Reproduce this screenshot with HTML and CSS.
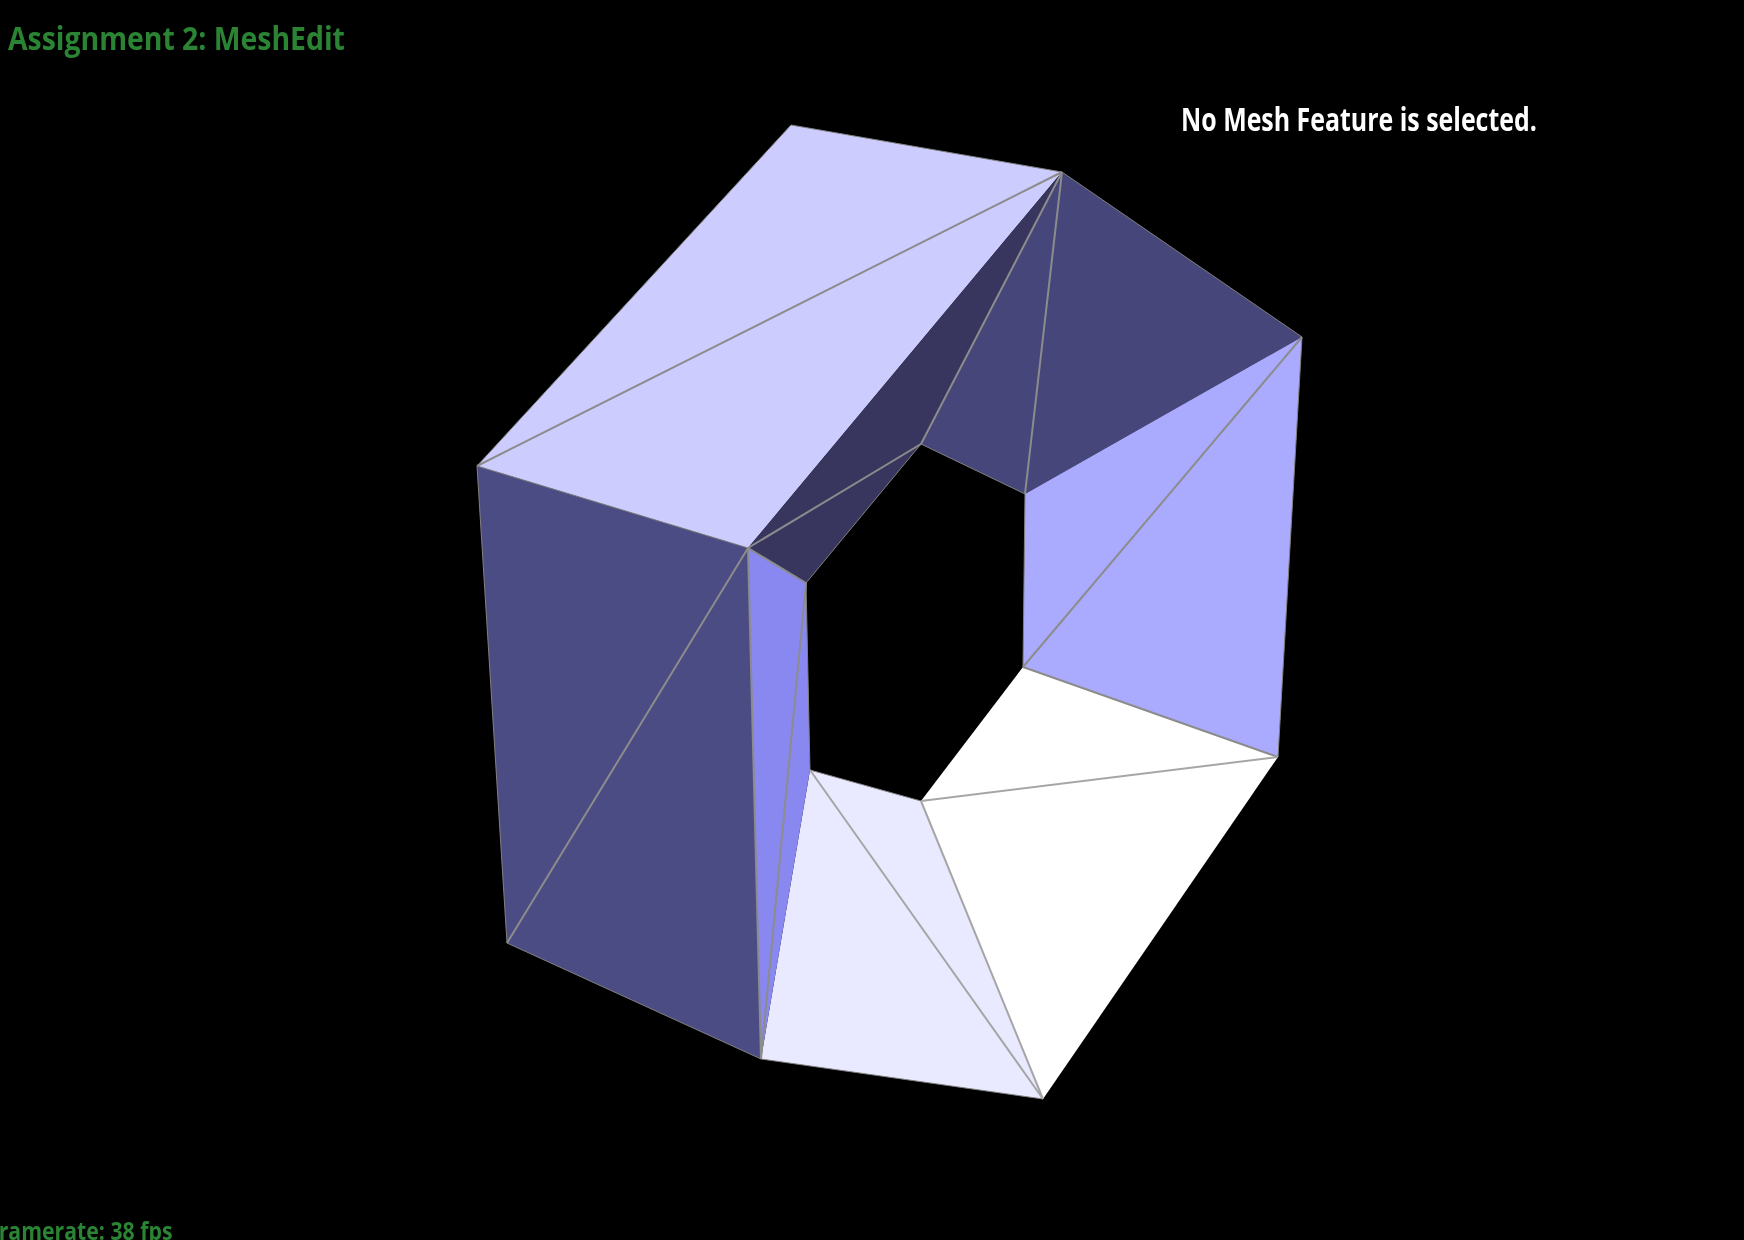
FILE: index.html
```html
<!DOCTYPE html>
<html lang="en">
<head>
<meta charset="utf-8">
<title>Assignment 2: MeshEdit</title>
<link rel="stylesheet" href="styles.css">
</head>
<body>
<main class="viewport">
  <svg class="scene" viewBox="0 0 1744 1240" width="1744" height="1240" aria-hidden="true">
    <g class="faces">
      <polygon class="f-top" points="477,466 791,125 1062,172"/>
      <polygon class="f-top" points="477,466 1062,172 748,548"/>
      <polygon class="f-dark" points="1062,172 1302,337 1025,494"/>
      <polygon class="f-dark" points="1062,172 1025,494 921,444"/>
      <polygon class="f-darkest" points="1062,172 921,444 748,548"/>
      <polygon class="f-darkest" points="748,548 921,444 806,583"/>
      <polygon class="f-right" points="1025,494 1302,337 1023,667"/>
      <polygon class="f-right" points="1302,337 1278,757 1023,667"/>
      <polygon class="f-white" points="1023,667 1278,757 921,801"/>
      <polygon class="f-white" points="921,801 1278,757 1043,1099"/>
      <polygon class="f-pale" points="810,770 921,801 1043,1099"/>
      <polygon class="f-pale" points="810,770 1043,1099 761,1059"/>
      <polygon class="f-blue" points="748,548 806,583 761,1059"/>
      <polygon class="f-blue" points="806,583 810,770 761,1059"/>
      <polygon class="f-left" points="477,466 748,548 507,943"/>
      <polygon class="f-left" points="748,548 761,1059 507,943"/>
    </g>
    <g class="edges">
      <path class="edge-faint" d="M477 466L791 125L1062 172L1302 337L1278 757M1043 1099L761 1059L507 943L477 466L748 548M921 444L1025 494L1023 667M921 801L810 770L806 583L921 444"/>
      <path class="edge-inner" d="M477 466L1062 172M1062 172L921 444M1062 172L1025 494M1302 337L1023 667M806 583L761 1059M748 548L761 1059M748 548L507 943M748 548L921 444M748 548L806 583M1023 667L1278 757"/>
      <path class="edge-light" d="M1278 757L921 801M921 801L1043 1099M810 770L1043 1099"/>
    </g>
  </svg>
  <h1 class="hud hud-title">Assignment 2: MeshEdit</h1>
  <p class="hud hud-status">No Mesh Feature is selected.</p>
  <p class="hud hud-fps">Framerate: 38 fps</p>
</main>
</body>
</html>
```
FILE: styles.css
```css
html, body {
  margin: 0;
  padding: 0;
  background: #000;
}

.viewport {
  position: relative;
  width: 1744px;
  height: 1240px;
  overflow: hidden;
  background: #000;
}

.scene {
  display: block;
  filter: blur(0.6px);
}

.f-top { fill: #ccccff; }
.f-dark { fill: #46467a; }
.f-darkest { fill: #38365e; }
.f-right { fill: #aaaaff; }
.f-white { fill: #ffffff; }
.f-pale { fill: #e9e9ff; }
.f-blue { fill: #8888f0; }
.f-left { fill: #4c4c84; }

.edges path {
  fill: none;
  stroke-linejoin: round;
}

.edges .edge-faint {
  stroke: #808080;
  stroke-width: 1;
}

.edges .edge-inner {
  stroke: #8c8c8c;
  stroke-width: 2;
}

.edges .edge-light {
  stroke: #a6a6a6;
  stroke-width: 2;
}

.hud {
  position: absolute;
  margin: 0;
  font-family: "Open Sans", sans-serif;
  font-weight: 700;
  white-space: nowrap;
  transform-origin: left top;
  filter: blur(0.6px);
}

.hud-title {
  left: 8px;
  top: 15px;
  font-size: 33px;
  line-height: 45px;
  color: #2a8434;
  transform: scaleX(0.86);
}

.hud-status {
  left: 1181px;
  top: 96px;
  font-size: 33px;
  line-height: 45px;
  color: #fff;
  transform: scaleX(0.755);
}

.hud-fps {
  left: -13px;
  top: 1213px;
  font-size: 25px;
  line-height: 34px;
  color: #2a8434;
  transform: scaleX(0.85);
}
```
